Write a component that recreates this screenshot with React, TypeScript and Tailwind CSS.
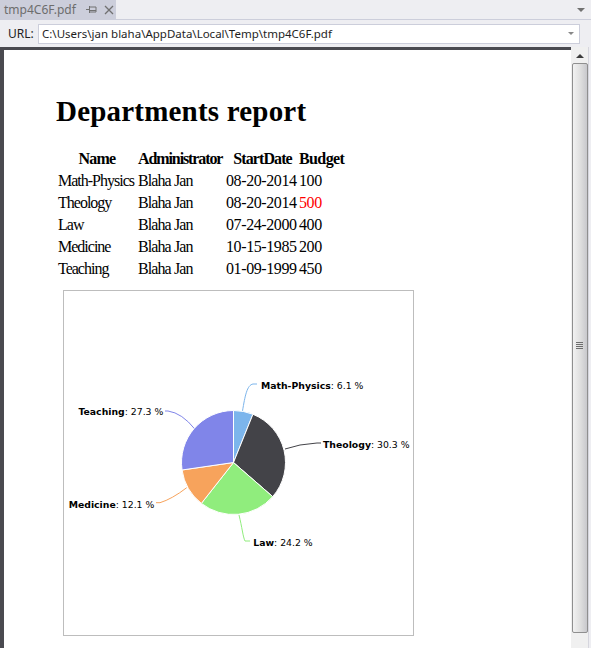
import React from 'react';

const rows = [
  { name: 'Math-Physics', admin: 'Blaha Jan', date: '08-20-2014', budget: '100', red: false },
  { name: 'Theology', admin: 'Blaha Jan', date: '08-20-2014', budget: '500', red: true },
  { name: 'Law', admin: 'Blaha Jan', date: '07-24-2000', budget: '400', red: false },
  { name: 'Medicine', admin: 'Blaha Jan', date: '10-15-1985', budget: '200', red: false },
  { name: 'Teaching', admin: 'Blaha Jan', date: '01-09-1999', budget: '450', red: false },
];

const slices = [
  { name: 'Math-Physics', pct: 6.1, color: '#7cb5ec' },
  { name: 'Theology', pct: 30.3, color: '#434348' },
  { name: 'Law', pct: 24.2, color: '#90ed7d' },
  { name: 'Medicine', pct: 12.1, color: '#f7a35c' },
  { name: 'Teaching', pct: 27.3, color: '#8085e9' },
];

const CX = 169.5;
const CY = 171.5;
const R = 52;

function pt(deg: number) {
  const a = (deg * Math.PI) / 180;
  return [CX + R * Math.sin(a), CY - R * Math.cos(a)];
}

const PieChart = () => {
  let start = 0;
  const paths = slices.map((s) => {
    const sweep = (s.pct / 100) * 360;
    const [x1, y1] = pt(start);
    const [x2, y2] = pt(start + sweep);
    const large = sweep > 180 ? 1 : 0;
    const d = `M ${CX} ${CY} L ${x1} ${y1} A ${R} ${R} 0 ${large} 1 ${x2} ${y2} Z`;
    start += sweep;
    return <path key={s.name} d={d} fill={s.color} stroke="#ffffff" strokeWidth={1} strokeLinejoin="round" />;
  });

  return (
    <svg width="349" height="344" className="block" style={{ fontFamily: '"DejaVu Sans", Verdana, sans-serif' }}>
      {/* connectors */}
      <g fill="none" strokeWidth={1}>
        <path d="M 178.5 120 C 181 105, 183 94, 189 93 L 193 93" stroke="#7cb5ec" />
        <path d="M 221 158 Q 235 153, 253 152 L 257 152" stroke="#434348" />
        <path d="M 175 224 C 178 236, 179 246, 181 250 L 186 250" stroke="#90ed7d" />
        <path d="M 122.7 196.7 Q 108 208, 96 211.7 L 92 211.7" stroke="#f7a35c" />
        <path d="M 131 138.3 Q 118 122, 104 120 L 101 120" stroke="#8085e9" />
      </g>
      {paths}
      <g fontSize="9.3" fill="#000000">
        <text x="197" y="98">
          <tspan fontWeight="bold">Math-Physics</tspan>: 6.1 %
        </text>
        <text x="259" y="157.3">
          <tspan fontWeight="bold">Theology</tspan>: 30.3 %
        </text>
        <text x="189.3" y="255">
          <tspan fontWeight="bold">Law</tspan>: 24.2 %
        </text>
        <text x="90.3" y="216.7" textAnchor="end">
          <tspan fontWeight="bold">Medicine</tspan>: 12.1 %
        </text>
        <text x="99.3" y="124.3" textAnchor="end">
          <tspan fontWeight="bold">Teaching</tspan>: 27.3 %
        </text>
      </g>
    </svg>
  );
};

const Scrollbar = () => (
  <div className="w-[18px] h-full bg-[#f0f0f0] border-r border-[#d6d6de] flex flex-col items-center">
    <div className="h-[15px] w-full flex items-center justify-center pt-[2px]">
      <div className="w-0 h-0 border-l-[4px] border-r-[4px] border-b-[4px] border-l-transparent border-r-transparent border-b-[#3c3c3c]" />
    </div>
    <div className="mt-[1px] w-[16px] h-[570px] rounded-[2px] border border-[#8f8f8f] bg-gradient-to-r from-[#f2f2f2] via-[#e0e0e0] to-[#c8c8cc] flex items-center justify-center">
      <div className="flex flex-col gap-[1px] -mt-[6px]">
        <div className="w-[7px] h-[1px] bg-[#6e6e6e]" />
        <div className="w-[7px] h-[1px] bg-[#6e6e6e]" />
        <div className="w-[7px] h-[1px] bg-[#6e6e6e]" />
        <div className="w-[7px] h-[1px] bg-[#6e6e6e]" />
      </div>
    </div>
  </div>
);

export default function App() {
  return (
    <div
      className="w-[591px] h-[648px] overflow-hidden bg-[#eeeef2] flex flex-col"
      style={{ fontFamily: '"Noto Sans", "Open Sans", sans-serif' }}
    >
      {/* Tab strip */}
      <div className="h-[20px] flex items-stretch border-b border-[#cccedb] shrink-0">
        <div className="w-[116px] bg-[#cccedb] flex items-center pl-[4px] text-[12px] text-[#6d6d6d] leading-none">
          <span>tmp4C6F.pdf</span>
          <svg width="11" height="9" viewBox="0 0 11 9" className="ml-[10px]">
            <path d="M0 4.5 H3.5 M3.5 1 V8 M3.5 2 H10 V7 H3.5 M3.5 5.5 H10" stroke="#717171" strokeWidth="1" fill="none" />
          </svg>
          <svg width="10" height="10" viewBox="0 0 10 10" className="ml-[7px]">
            <path d="M1 1 L9 9 M9 1 L1 9" stroke="#717171" strokeWidth="1.3" />
          </svg>
        </div>
        <div className="flex-1" />
        <div className="w-[20px] flex items-center justify-center">
          <div className="w-0 h-0 border-l-[4px] border-r-[4px] border-t-[4px] border-l-transparent border-r-transparent border-t-[#717171]" />
        </div>
      </div>

      {/* URL row */}
      <div className="h-[26px] flex items-center shrink-0 pt-[1px]">
        <span className="ml-[8px] w-[30px] text-[12px] text-[#1e1e1e]">URL:</span>
        <div className="w-[542px] h-[20px] bg-white border border-[#cccedb] flex items-center pl-[3px] pr-[5px]">
          <span className="flex-1 text-[11.5px] text-[#1e1e1e] leading-none">C:\Users\jan blaha\AppData\Local\Temp\tmp4C6F.pdf</span>
          <div className="w-0 h-0 border-l-[3px] border-r-[3px] border-t-[3px] border-l-transparent border-r-transparent border-t-[#888888]" />
        </div>
      </div>

      {/* Viewer */}
      <div className="mt-[1px] flex-1 flex min-h-0">
        <div className="flex-1 flex flex-col border-t-[3px] border-l-[4px] border-[#4a4a50] bg-white">
          <div className="pl-[52px] pt-[47px]" style={{ fontFamily: '"Liberation Serif", "Times New Roman", serif' }}>
            <h1 className="text-[29px] font-bold leading-[29px] text-black tracking-[0.2px]">Departments report</h1>
            <div className="mt-[22px] ml-[2px] text-[16px] text-black leading-[22px]">
              <div className="grid grid-cols-[80px_88px_73px_50px] font-bold">
                <div className="text-center tracking-[-0.8px] pr-[2px]">Name</div>
                <div className="tracking-[-1.1px] whitespace-nowrap">Administrator</div>
                <div className="text-center tracking-[-0.9px]">StartDate</div>
                <div className="tracking-[-0.6px]">Budget</div>
              </div>
              {rows.map((r) => (
                <div key={r.name} className="grid grid-cols-[80px_88px_73px_50px]">
                  <div className="tracking-[-1px] whitespace-nowrap">{r.name}</div>
                  <div className="tracking-[-0.9px]">{r.admin}</div>
                  <div className="tracking-[-0.4px]">{r.date}</div>
                  <div className={r.red ? 'text-[#ff0000] tracking-[-0.4px]' : 'tracking-[-0.4px]'}>{r.budget}</div>
                </div>
              ))}
            </div>
            <div className="mt-[10px] ml-[7px] w-[351px] h-[346px] border border-[#bdbdbd] bg-white">
              <PieChart />
            </div>
          </div>
        </div>
        <Scrollbar />
        <div className="w-[2px]" />
      </div>
    </div>
  );
}
